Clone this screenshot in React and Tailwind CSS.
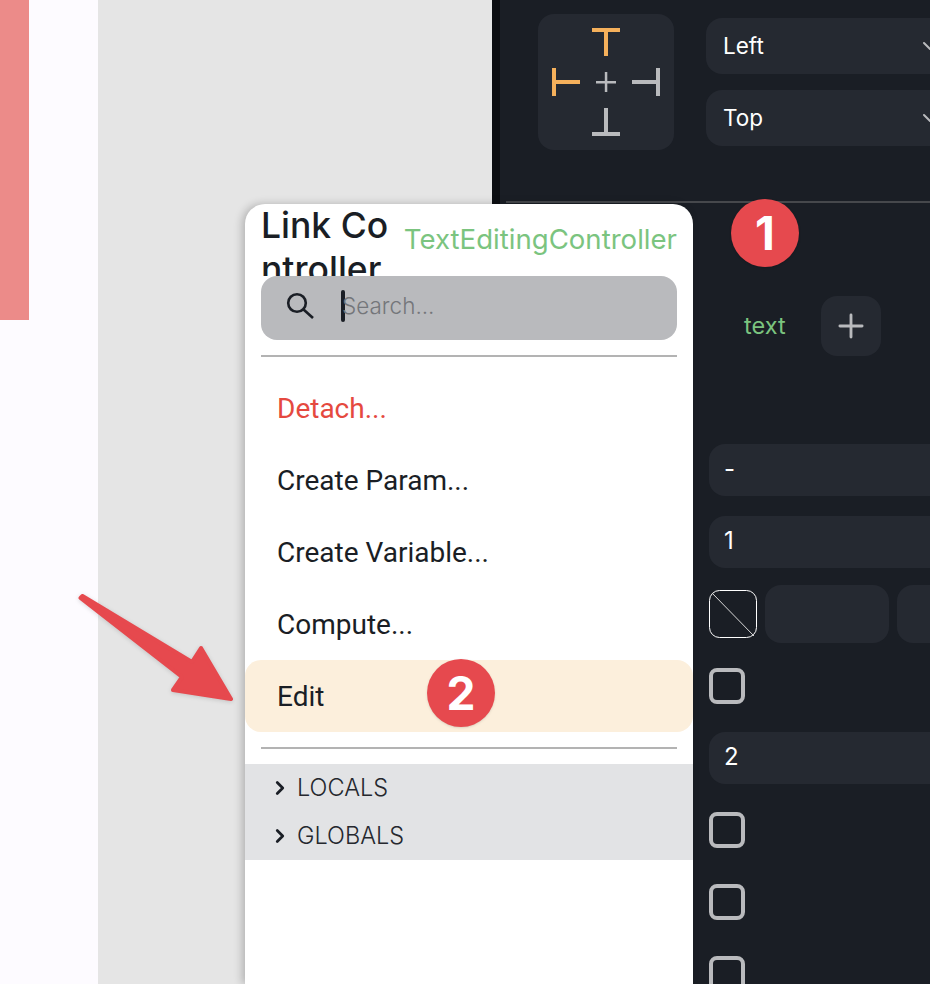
import React from "react";
import { ChevronDown, ChevronRight, Plus } from "lucide-react";

const sans = "font-['Inter','Noto_Sans',sans-serif]";

// Alignment picker glyphs
const AlignPad = () => (
  <div className="w-[136px] h-[136px] rounded-[16px] bg-[#252931] shrink-0">
    <svg width="136" height="136" viewBox="0 0 136 136" fill="#f5b05b">
      <rect x="54" y="14" width="28" height="4" />
      <rect x="66" y="14" width="4" height="28" />
      <rect x="14" y="54" width="4" height="28" />
      <rect x="14" y="66" width="28" height="4" />
      <g fill="#b9babd">
        <rect x="118" y="54" width="4" height="28" />
        <rect x="94" y="66" width="28" height="4" />
        <rect x="54" y="118" width="28" height="4" />
        <rect x="66" y="94" width="4" height="28" />
        <rect x="58" y="67" width="20" height="2.5" />
        <rect x="66.8" y="58" width="2.5" height="20" />
      </g>
    </svg>
  </div>
);

const SelectBox = ({ label }) => (
  <div className="h-[56px] w-[248px] rounded-[16px] bg-[#252931] flex items-center justify-between pl-[17px] pr-[12px] text-[22.5px] text-white">
    <span>{label}</span>
    <ChevronDown size={24} color="#b9babd" strokeWidth={2} />
  </div>
);

const Field = ({ children, className = "" }) => (
  <div className={`h-[52px] w-[260px] rounded-[16px] bg-[#252931] flex items-center pl-[15px] pb-[3px] text-[24px] text-white ${className}`}>
    {children}
  </div>
);

const Check = ({ className = "" }) => (
  <div className={`w-[36px] h-[36px] rounded-[8px] border-[4px] border-[#b9babd] ${className}`} />
);

const MenuItem = ({ label, className = "" }) => (
  <div className={`h-[72px] flex items-center pl-[32px] pt-[2px] text-[28px] font-['Roboto',sans-serif] text-[#1a1e25] ${className}`}>
    {label}
  </div>
);

const ScopeRow = ({ label }) => (
  <div className="h-[48px] flex items-center pl-[24px] gap-[6px] text-[23.5px] text-[#25282e] font-light">
    <ChevronRight size={22} color="#1a1e25" strokeWidth={3} />
    <span>{label}</span>
  </div>
);

const Badge = ({ n, className = "" }) => (
  <div className={`absolute w-[68px] h-[68px] rounded-full bg-[#e6494e] flex items-center justify-center text-white text-[46px] font-bold shadow-sm font-['Inter',sans-serif] ${className}`}>
    {n}
  </div>
);

export default function App() {
  return (
    <div className={`relative w-[930px] h-[984px] overflow-hidden flex ${sans}`}>
      <div className="w-[98px] shrink-0 bg-[#fdfbff]">
        <div className="w-[29px] h-[320px] bg-[#ec8b89]" />
      </div>
      <div className="w-[394px] shrink-0 bg-[#e5e5e5]" />

      {/* Right properties panel */}
      <div className="flex-1 min-w-0 border-l-[8px] border-[#0c0e12] bg-[#1a1e25] pt-[14px]">
        <div className="flex gap-[32px] pl-[38px]">
          <AlignPad />
          <div className="flex flex-col gap-[16px] pt-[4px]">
            <SelectBox label="Left" />
            <SelectBox label="Top" />
          </div>
        </div>
        <div className="ml-[6px] mt-[51px] h-[2px] bg-[#46484c]" />

        <div className="mt-[93px] pl-[244px] flex items-center gap-[35px]">
          <span className="text-[23.5px] text-[#7bc47f]">text</span>
          <div className="w-[60px] h-[60px] rounded-[16px] bg-[#252931] flex items-center justify-center">
            <Plus size={38} color="#b9babd" strokeWidth={1.8} />
          </div>
        </div>

        <div className="mt-[88px] pl-[209px] flex flex-col items-start">
          <Field className="text-[#b9babd]">-</Field>
          <Field className="mt-[20px]">1</Field>
          <div className="mt-[17px] h-[58px] flex items-center">
            <svg width="48" height="49" viewBox="0 0 48 49" fill="none" stroke="#ffffff" strokeWidth="1" className="shrink-0">
              <rect x="0.5" y="0.5" width="47" height="47" rx="10" />
              <path d="M3 3L45 46" stroke="#d8d8d8" />
            </svg>
            <div className="ml-[8px] w-[124px] h-[58px] rounded-[16px] bg-[#252931] shrink-0" />
            <div className="ml-[8px] w-[124px] h-[58px] rounded-[16px] bg-[#252931] shrink-0" />
          </div>
          <Check className="mt-[25px]" />
          <Field className="mt-[28px]">2</Field>
          <Check className="mt-[28px]" />
          <Check className="mt-[36px]" />
          <Check className="mt-[36px]" />
        </div>
      </div>

      {/* Variable menu, floats over the canvas and panel */}
      <div className="absolute left-[245px] top-[204px] bottom-0 w-[448px] rounded-t-[20px] bg-white shadow-[-3px_0_8px_rgba(0,0,0,0.22)] overflow-hidden">
        <div className="h-[72px] flex pl-[16px] pr-[16px] justify-between overflow-hidden">
          <div className="w-[130px] shrink-0 break-all text-[35.5px] leading-[44px] font-medium text-[#1a1e25]">Link Controller</div>
          <div className="pt-[18px] text-[27.6px] leading-[34px] whitespace-nowrap text-[#7bc47f]">TextEditingController</div>
        </div>
        <div className="mx-[16px] h-[64px] rounded-[16px] bg-[#b9babd] flex items-center pl-[25px] pb-[4px]">
          <svg width="30" height="30" viewBox="0 0 30 30" fill="none" stroke="#1a1e25" strokeWidth="2.6" className="shrink-0">
            <circle cx="11" cy="12" r="8.8" />
            <path d="M17.5 18.5L27 27" />
          </svg>
          <div className="ml-[25px] w-[4px] h-[32px] rounded-full bg-[#1a1e25]" />
          <span className="-ml-[3px] text-[22.5px] font-light text-[#74767a]">Search...</span>
        </div>
        <div className="mx-[16px] mt-[15px] h-[2px] bg-[#b3b3b3]" />
        <div className="mt-[15px]">
          <MenuItem label="Detach..." className="text-[#e5493f]" />
          <MenuItem label="Create Param..." />
          <MenuItem label="Create Variable..." />
          <MenuItem label="Compute..." />
          <MenuItem label="Edit" className="bg-[#fcefdc] rounded-[16px]" />
        </div>
        <div className="mx-[16px] mt-[15px] h-[2px] bg-[#b3b3b3]" />
        <div className="mt-[15px] bg-[#e2e3e5]">
          <ScopeRow label="LOCALS" />
          <ScopeRow label="GLOBALS" />
        </div>
      </div>

      {/* Annotations */}
      <Badge n="1" className="left-[731px] top-[199px]" />
      <Badge n="2" className="left-[427px] top-[659px]" />
      <svg width="190" height="140" viewBox="0 0 190 140" className="absolute left-[70px] top-[585px] drop-shadow-sm">
        <path
          d="M12.5 11L122 77L131 63L161 114L103 105L112 92L10.5 13Z"
          fill="#e6494e"
          stroke="#e6494e"
          strokeWidth="4"
          strokeLinejoin="round"
        />
      </svg>
    </div>
  );
}
